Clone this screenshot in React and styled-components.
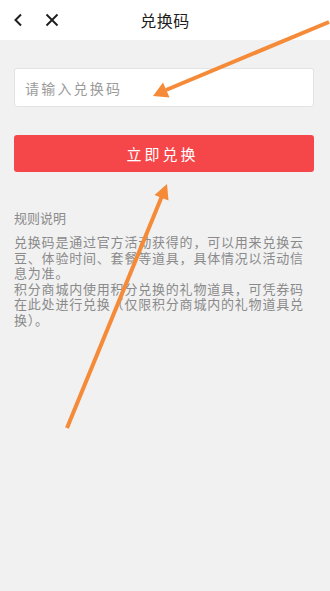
import React from "react";
import styled, { createGlobalStyle } from "styled-components";

const Global = createGlobalStyle`
  html, body { margin: 0; padding: 0; background: #f1f1f1; }
  body { font-family: "Noto Sans CJK SC", "Noto Sans", sans-serif; }
  * { box-sizing: border-box; }
`;

const Screen = styled.div`
  position: relative;
  width: 330px;
  height: 591px;
  background: #f1f1f1;
  overflow: hidden;
`;

const Header = styled.header`
  height: 40px;
  background: #ffffff;
  display: grid;
  grid-template-columns: 1fr auto 1fr;
  align-items: center;
`;

const NavGroup = styled.div`
  display: flex;
  align-items: center;
  gap: 20px;
  padding-left: 11px;
`;

const NavButton = styled.button`
  width: 14px;
  height: 14px;
  padding: 0;
  border: 0;
  background: none;
  display: flex;
  align-items: center;
  justify-content: center;
  color: #1e1e1e;
`;

const Title = styled.h1`
  margin: 0;
  font-size: 16px;
  font-weight: 400;
  color: #1e1e1e;
  letter-spacing: 0.5px;
`;

const Content = styled.main`
  padding: 28px 16px 0 14px;
  display: flex;
  flex-direction: column;
`;

const CodeInput = styled.input`
  height: 39px;
  width: 100%;
  border: 1px solid #e2e2e2;
  border-radius: 3px;
  background: #fff;
  padding: 0 10px;
  font-family: inherit;
  font-size: 14px;
  letter-spacing: 2.2px;
  color: #333;
  outline: none;
  &::placeholder { color: #9b9b9b; }
`;

const RedeemButton = styled.button`
  margin-top: 28px;
  height: 37px;
  width: 100%;
  border: 0;
  border-radius: 3px;
  background: #f5474a;
  color: #fff;
  font-family: inherit;
  font-size: 15px;
  letter-spacing: 3px;
  padding-left: 3px;
`;

const RulesTitle = styled.h2`
  margin: 36px 0 0;
  font-size: 13px;
  font-weight: 400;
  line-height: 20px;
  color: #8a8a8a;
`;

const RulesText = styled.p`
  margin: 6px 0 0;
  font-size: 13px;
  line-height: 15.6px;
  letter-spacing: 0.8px;
  color: #8a8a8a;
`;

const Overlay = styled.svg`
  position: absolute;
  left: 0;
  top: 0;
  width: 330px;
  height: 591px;
  pointer-events: none;
`;

const BackIcon = () => (
  <svg width="10" height="14" viewBox="0 0 10 14">
    <path d="M8 1.5 L2.5 7 L8 12.5" fill="none" stroke="currentColor" strokeWidth="2" />
  </svg>
);

const CloseIcon = () => (
  <svg width="14" height="14" viewBox="0 0 14 14">
    <path d="M1.5 1.5 L12.5 12.5 M12.5 1.5 L1.5 12.5" fill="none" stroke="currentColor" strokeWidth="1.9" />
  </svg>
);

export default function App() {
  return (
    <Screen>
      <Global />
      <Header>
        <NavGroup>
          <NavButton aria-label="返回"><BackIcon /></NavButton>
          <NavButton aria-label="关闭"><CloseIcon /></NavButton>
        </NavGroup>
        <Title>兑换码</Title>
        <div />
      </Header>
      <Content>
        <CodeInput placeholder="请输入兑换码" />
        <RedeemButton>立即兑换</RedeemButton>
        <RulesTitle>规则说明</RulesTitle>
        <RulesText>
          兑换码是通过官方活动获得的，可以用来兑换云豆、体验时间、套餐等道具，具体情况以活动信息为准。
          <br />
          积分商城内使用积分兑换的礼物道具，可凭券码在此处进行兑换（仅限积分商城内的礼物道具兑换）。
        </RulesText>
      </Content>
      <Overlay viewBox="0 0 330 591">
        <g stroke="#f58a38" strokeWidth="4" strokeLinecap="butt" fill="#f58a38">
          <line x1="329" y1="22" x2="166" y2="90" />
          <polygon points="153,96 163,82.5 169.5,97.5" stroke="none" />
          <line x1="67" y1="428" x2="162" y2="196" />
          <polygon points="167,184 154.5,195 168.5,200.5" stroke="none" />
        </g>
      </Overlay>
    </Screen>
  );
}
